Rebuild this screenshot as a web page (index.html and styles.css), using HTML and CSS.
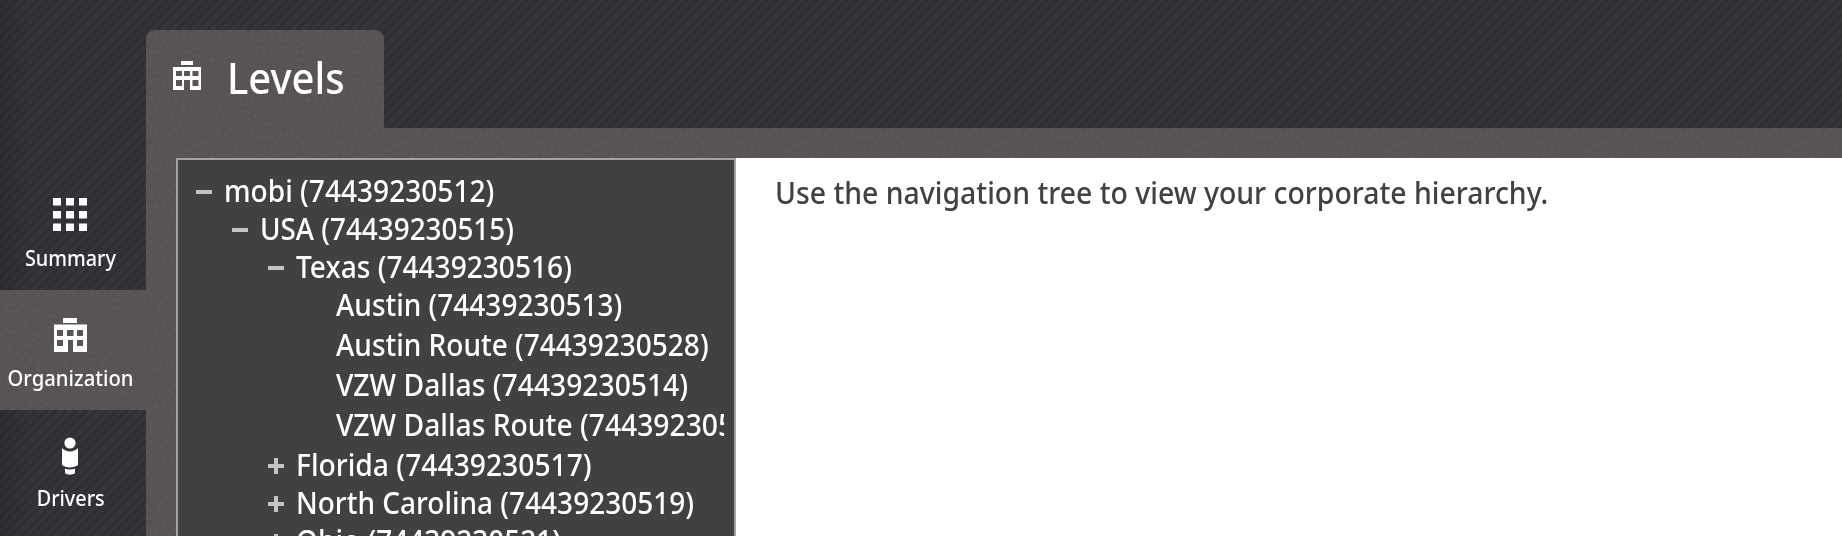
FILE: index.html
```
<!DOCTYPE html>
<html lang="en">
<head>
<meta charset="utf-8">
<title>Levels</title>
<link rel="stylesheet" href="styles.css">
</head>
<body>
<svg class="defs" width="0" height="0">
  <defs>
    <symbol id="building" viewBox="0 0 28 29">
      <path fill="#fff" fill-rule="evenodd" d="M8 0h12v4H8zM0 6h28v23H17V19h-6v10H0zM3 10v5h6v-5zM11 10v5h6v-5zM19.500 10v5h6v-5zM3 19v6h6v-6zM19.500 19v6h6v-6z"/>
    </symbol>
  </defs>
</svg>
<div class="app">
  <nav class="sidebar">
    <a class="nav-item">
      <svg class="nav-icon" width="34" height="34" viewBox="0 0 34 34"><path fill="#fff" d="M0 0h8v7.500H0zM13 0h8v7.500h-8zM26 0h8v7.500h-8zM0 13h8v7.500H0zM13 13h8v7.500h-8zM26 13h8v7.500h-8zM0 25.500h8V33H0zM13 25.500h8V33h-8zM26 25.500h8V33h-8z"/></svg>
      <span class="nav-label">Summary</span>
    </a>
    <a class="nav-item active">
      <svg class="nav-icon" width="34" height="34" viewBox="0 0 34 34"><path fill="#fff" fill-rule="evenodd" d="M10 0h14v5H10zM1 6.500h33V34H20V22h-5v12H1zM4 12v6h6v-6zM14 12v6h6.500v-6zM24 12v6h6v-6zM4 22v6h6v-6zM24 22v6h6v-6z"/></svg>
      <span class="nav-label org">Organization</span>
    </a>
    <a class="nav-item">
      <svg class="nav-icon driver" width="34" height="38" viewBox="0 0 34 38"><circle cx="17" cy="6" r="5.600" fill="#fff"/><path fill="#fff" d="M9 11c4 4.500 12 4.500 16 0v17c-4 3.200-12 3.200-16 0zM12 31.800c3 .8 7 .8 10 0V36c-2 2.200-8 2.200-10 0z"/></svg>
      <span class="nav-label">Drivers</span>
    </a>
  </nav>
  <main class="main">
    <header class="tab">
      <svg width="28" height="29"><use href="#building"/></svg>
      <h1 class="tab-title">Levels</h1>
    </header>
    <section class="panel">
      <div class="tree">
        <ul class="tree-list">
          <li class="row depth-0"><i class="toggle"></i><span class="label">mobi (74439230512)</span></li>
          <li class="row depth-1"><i class="toggle"></i><span class="label usa">USA (74439230515)</span></li>
          <li class="row depth-2"><i class="toggle"></i><span class="label">Texas (74439230516)</span></li>
          <li class="row leaf"><span class="label austin">Austin (74439230513)</span></li>
          <li class="row leaf"><span class="label austin">Austin Route (74439230528)</span></li>
          <li class="row leaf"><span class="label dallas">VZW Dallas (74439230514)</span></li>
          <li class="row leaf"><span class="label dallas">VZW Dallas Route (74439230529)</span></li>
          <li class="row depth-2"><i class="toggle plus"></i><span class="label dallas">Florida (74439230517)</span></li>
          <li class="row depth-2"><i class="toggle plus"></i><span class="label austin">North Carolina (74439230519)</span></li>
          <li class="row depth-2"><i class="toggle plus"></i><span class="label austin">Ohio (74439230521)</span></li>
        </ul>
      </div>
      <div class="content"><p class="hint">Use the navigation tree to view your corporate hierarchy.</p></div>
    </section>
  </main>
</div>
</body>
</html>
```
FILE: styles.css
```
* { box-sizing: border-box; }
:root {
  --grain: url("data:image/svg+xml,%3Csvg xmlns='http://www.w3.org/2000/svg' width='200' height='200'%3E%3Cfilter id='n'%3E%3CfeTurbulence type='fractalNoise' baseFrequency='.25' numOctaves='2' stitchTiles='stitch'/%3E%3CfeColorMatrix values='0 0 0 0 0 0 0 0 0 0 0 0 0 0 0 .12 0 0 0 -.03'/%3E%3C/filter%3E%3Crect width='200' height='200' filter='url(%23n)'/%3E%3C/svg%3E");
}
body {
  margin: 0;
  height: 536px;
  overflow: hidden;
  font-family: "Noto Sans", sans-serif;
  font-weight: 500;
  color: #fff;
  background: repeating-linear-gradient(135deg, #34343a 0, #333339 3px, #2d2d32 4.600px, #2d2d32 5.400px, #34343a 7.071px);
}
.defs { display: block; }
.app { display: flex; height: 536px; }

.sidebar {
  width: 146px;
  flex: none;
  padding-top: 170px;
  background: linear-gradient(90deg, rgba(0, 0, 0, .12), rgba(0, 0, 0, 0) 30px);
}
.nav-item {
  display: flex;
  flex-direction: column;
  align-items: center;
  height: 120px;
  padding: 28px 6px 0 0;
}
.nav-item.active { background: var(--grain) #5b5657; }
.nav-icon { flex: none; margin-bottom: 10px; }
.driver { margin: -1px 0 7px; }
.nav-label {
  font-size: 22px;
  line-height: 30px;
  white-space: nowrap;
  padding-left: 2px;
  transform: scaleX(.9);
}
.nav-label.org { padding-left: 0; transform: scaleX(.92); }

.main {
  flex: 1;
  min-width: 0;
  display: flex;
  flex-direction: column;
  padding-top: 30px;
}
.tab {
  width: 238px;
  height: 98px;
  display: flex;
  align-items: flex-start;
  gap: 26px;
  padding: 31px 0 0 27px;
  border-radius: 9px 9px 0 0;
  background: var(--grain) #5b5657;
}
.tab-title {
  margin: -12px 0 0;
  font-size: 43px;
  font-weight: 500;
  line-height: 58px;
  transform: scaleX(.93);
  transform-origin: 0 0;
}
.panel {
  flex: 1;
  min-height: 0;
  display: flex;
  padding: 30px 0 0 30px;
  background: var(--grain) #5b5657;
}
.tree {
  width: 560px;
  flex: none;
  border: 2px solid #a2a2a2;
  border-bottom: 0;
  background: #414042;
  padding: 11px 10px 0 18px;
  overflow: hidden;
}
.tree-list {
  list-style: none;
  margin: 0;
  padding: 0;
  overflow: hidden;
}
.row { display: flex; align-items: center; gap: 12px; height: 38px; }
.depth-1 { padding-left: 36px; }
.depth-2 { padding-left: 72px; }
.leaf { padding-left: 140px; margin-bottom: 2px; }
.label, .hint {
  font-size: 31px;
  line-height: 38px;
  white-space: nowrap;
  transform: scaleX(.906);
  transform-origin: 0 0;
}
.label.usa { transform: scaleX(.898); }
.label.austin { transform: scaleX(.903); }
.label.dallas { transform: scaleX(.911); }
.toggle {
  width: 16px;
  height: 16px;
  margin-top: 3px;
  flex: none;
  background: linear-gradient(#c4c4c4, #c4c4c4) center / 16px 4px no-repeat;
}
.toggle.plus {
  background:
    linear-gradient(#c4c4c4, #c4c4c4) center / 16px 4px no-repeat,
    linear-gradient(#c4c4c4, #c4c4c4) center / 4px 16px no-repeat;
}
.content {
  flex: 1;
  min-width: 0;
  padding: 15px 0 0 39px;
  background: #fff;
  color: #414042;
}
.hint { margin: 0; transform: scaleX(.916); }
```
